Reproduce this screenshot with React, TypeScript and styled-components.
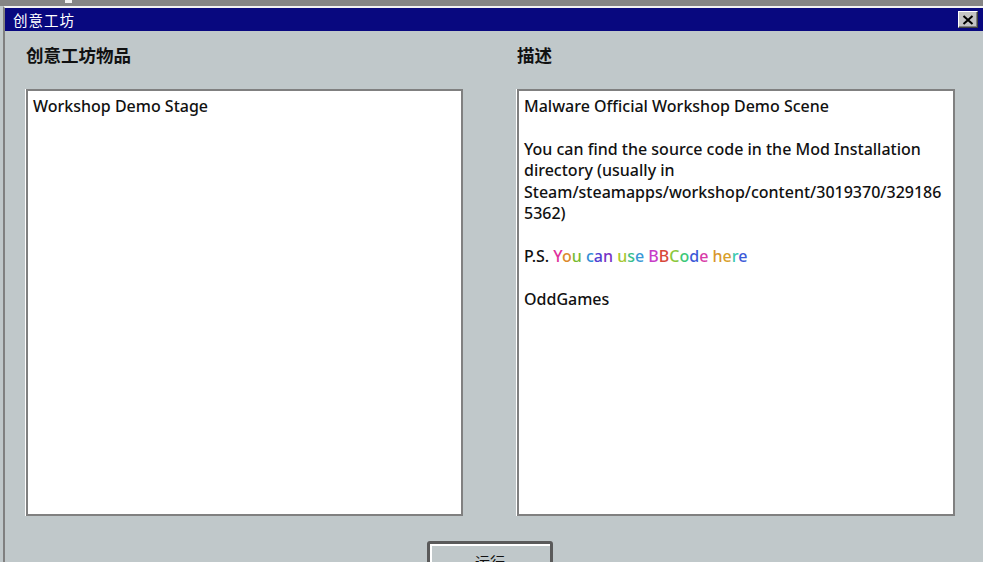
import styled, { createGlobalStyle } from "styled-components";

const GlobalStyle = createGlobalStyle`
  html, body { margin: 0; padding: 0; overflow: hidden; }
  body {
    background: #c0c8ca;
    font-family: "Noto Sans", "Noto Sans CJK SC", sans-serif;
  }
`;

const Desktop = styled.div`
  width: 983px;
  height: 562px;
  display: flex;
  flex-direction: column;
  overflow: hidden;
`;

const TopStrip = styled.div`
  height: 6px;
  flex: none;
  background: #858585;
  display: flex;
  padding-left: 65px;

  span {
    width: 7px;
    height: 3px;
    background: #f2f2f2;
  }
`;

const Window = styled.div`
  margin-left: 3px;
  width: 978px;
  flex: 1;
  display: flex;
  flex-direction: column;
  border-left: 2px solid #808080;
  border-top: 2px solid #f2f2f2;
  background: #c0c8ca;
`;

const TitleBar = styled.div`
  height: 23px;
  flex: none;
  display: flex;
  align-items: center;
  padding: 0 5px 0 8px;
  background: #08087f;
  color: #fff;
  font-family: "Noto Sans CJK SC", sans-serif;
  font-size: 14.5px;
`;

const Title = styled.span`
  flex: 1;
  letter-spacing: 1px;
`;

const CloseButton = styled.button`
  width: 20px;
  height: 17px;
  padding: 0;
  display: flex;
  align-items: center;
  justify-content: center;
  background: #c4c4c4;
  border: 1px solid;
  border-color: #fff #404040 #404040 #fff;
  box-shadow: inset -1px -1px #808080;

  svg {
    width: 12px;
    height: 10px;
  }
`;

const Content = styled.div`
  display: grid;
  grid-template-columns: 437px 438px;
  column-gap: 54px;
  padding: 14px 0 0 21px;
`;

const Column = styled.section`
  display: flex;
  flex-direction: column;
  gap: 24px;
`;

const Label = styled.h2`
  margin: 0;
  height: 20px;
  line-height: 20px;
  font-family: "Noto Sans CJK SC", sans-serif;
  font-size: 17.5px;
  font-weight: 600;
  color: #111;
`;

const ListBox = styled.div`
  box-sizing: border-box;
  height: 427px;
  padding: 4.5px 5px 3px;
  background: #fff;
  border: 2px solid #808080;
  box-shadow: -1px 0 0 #fff;
  font-size: 16px;
  font-weight: 500;
  line-height: 21.5px;
  color: #111;
  overflow-wrap: anywhere;
`;

const Para = styled.p`
  margin: 0 0 21.5px;
`;

const Tint = styled.span<{ $c: string }>`
  color: ${(p) => p.$c};
`;

const Footer = styled.div`
  display: flex;
  justify-content: center;
  padding: 25px 8px 0 0;
`;

const RunButton = styled.button`
  width: 126px;
  height: 36px;
  border: 3px solid #5a5a5a;
  border-radius: 3px;
  background: #c0c8ca;
  box-shadow: inset 0 2px 0 #fff, inset 2px 0 0 #fff;
  font-family: "Noto Sans CJK SC", sans-serif;
  font-size: 15px;
  color: #111;
  padding: 4px 0 0;
`;

const rainbow: [string, string][] = [
  ["Y", "#e0309c"], ["o", "#dc8a2c"], ["u", "#78bb32"], [" ", ""],
  ["c", "#2e8ed6"], ["a", "#5240d0"], ["n", "#7a32c4"], [" ", ""],
  ["u", "#a6c830"], ["s", "#38bf8a"], ["e", "#3a98d6"], [" ", ""],
  ["B", "#c83cc8"], ["B", "#d8483a"], ["C", "#8cc83c"], ["o", "#3cc878"],
  ["d", "#3c5ad8"], ["e", "#d83ca8"], [" ", ""],
  ["h", "#d8962c"], ["e", "#d8a02c"], ["r", "#3cc8b0"], ["e", "#3c5ad8"],
];

const CloseIcon = () => (
  <svg viewBox="0 0 12 10">
    <path d="M1.5 1 L10.5 9 M10.5 1 L1.5 9" stroke="#000" strokeWidth="2" />
  </svg>
);

export default function App() {
  return (
    <>
      <GlobalStyle />
      <Desktop>
        <TopStrip>
          <span />
        </TopStrip>
        <Window>
          <TitleBar>
            <Title>创意工坊</Title>
            <CloseButton aria-label="关闭">
              <CloseIcon />
            </CloseButton>
          </TitleBar>
          <Content>
            <Column>
              <Label>创意工坊物品</Label>
              <ListBox>Workshop Demo Stage</ListBox>
            </Column>
            <Column>
              <Label>描述</Label>
              <ListBox>
                <Para>Malware Official Workshop Demo Scene</Para>
                <Para>
                  You can find the source code in the Mod Installation directory (usually in
                  Steam/steamapps/workshop/content/3019370/3291865362)
                </Para>
                <Para>
                  P.S.{" "}
                  {rainbow.map(([ch, c], i) =>
                    c ? <Tint key={i} $c={c}>{ch}</Tint> : " "
                  )}
                </Para>
                <Para>OddGames</Para>
              </ListBox>
            </Column>
          </Content>
          <Footer>
            <RunButton>运行</RunButton>
          </Footer>
        </Window>
      </Desktop>
    </>
  );
}
